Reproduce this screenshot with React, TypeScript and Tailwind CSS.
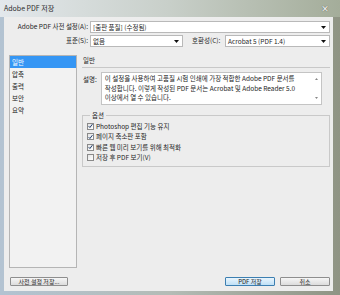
import { useState } from 'react'

const font = { fontFamily: '"Noto Sans CJK KR", "Noto Sans", sans-serif' }

const sections = ['일반', '압축', '출력', '보안', '요약']

const options = [
  { label: 'Photoshop 편집 기능 유지', checked: true },
  { label: '페이지 축소판 포함', checked: true },
  { label: '빠른 웹 미리 보기를 위해 최적화', checked: true },
  { label: '저장 후 PDF 보기(V)', checked: false },
]

function Select({ value, className = '' }: { value: string; className?: string }) {
  return (
    <div
      className={`flex h-[12px] items-center justify-between border border-[#b9b9b9] bg-white pl-[2px] pr-[3px] ${className}`}
    >
      <span className="whitespace-nowrap leading-[10px]">{value}</span>
      <svg width="5" height="3" viewBox="0 0 5 3" className="shrink-0">
        <path d="M0 0h5L2.5 3z" fill="#111" />
      </svg>
    </div>
  )
}

function Check({ checked }: { checked: boolean }) {
  return (
    <span className="flex h-[7px] w-[7px] shrink-0 items-center justify-center border border-[#8a8a8a] bg-gradient-to-br from-[#e4e4e4] to-white">
      {checked && (
        <svg width="6" height="6" viewBox="0 0 6 6">
          <path d="M0.8 3.2 2.3 4.8 5.3 0.8" fill="none" stroke="#1d3a6a" strokeWidth="1.2" />
        </svg>
      )}
    </span>
  )
}

export default function App() {
  const [active, setActive] = useState('일반')
  const [opts, setOpts] = useState(options)

  return (
    <div
      style={font}
      className="flex h-[295px] w-[340px] flex-col overflow-hidden bg-gradient-to-r from-[#b3c3d2] via-[#b4bcb6] to-[#8f9484] text-[6.5px] text-[#1e1e1e]"
    >
      {/* title bar */}
      <div className="flex h-[17px] shrink-0 items-center justify-between bg-gradient-to-r from-[#e3e8ec] via-[#c8cfc9] to-[#a4ad9a] pl-[4px] pr-[11px]">
        <span className="text-[7px] text-[#2a2a2a]">Adobe PDF 저장</span>
        <span className="text-[8px] font-bold leading-none text-white [text-shadow:0_0_1px_#333]">×</span>
      </div>

      {/* dialog body */}
      <div className="mb-[5px] ml-[4px] mr-[7px] flex flex-1 flex-col bg-[#ededed] pr-[3px] pt-[4px]">
        <div className="flex items-center gap-[2px]">
          <span className="w-[84px] whitespace-nowrap text-right">Adobe PDF 사전 설정(A):</span>
          <Select value="[출판 품질] (수정됨)" className="flex-1" />
        </div>
        <div className="mt-[2px] flex items-center gap-[2px]">
          <span className="w-[84px] text-right">표준(S):</span>
          <Select value="없음" className="w-[93px]" />
          <span className="ml-[7px] w-[30px] whitespace-nowrap">호환성(C):</span>
          <Select value="Acrobat 5 (PDF 1.4)" className="ml-[1px] flex-1" />
        </div>

        <div className="mt-[8px] flex flex-1 gap-[5px]">
          {/* section list */}
          <div className="ml-[5px] flex h-[213px] w-[68px] flex-col border border-[#b5b5b5] bg-[#f2f2f2]">
            {sections.map((s) => (
              <button
                key={s}
                type="button"
                onClick={() => setActive(s)}
                className={`h-[12px] px-[2px] text-left leading-[12px] ${
                  active === s ? 'bg-[#3596f4] text-white' : 'text-[#222]'
                }`}
              >
                {s}
              </button>
            ))}
          </div>

          {/* right panel */}
          <div className="flex flex-1 flex-col">
            <div className="border-b border-[#c8c8c8] pb-[3px] pl-[1px] pt-[1px] leading-[8px]">{active}</div>

            <div className="mt-[4px] flex gap-[4px] pl-[1px]">
              <span className="pt-[3px]">설명:</span>
              <div className="flex h-[33px] w-[221px] border border-[#c4c4c4] bg-white">
                <p className="flex-1 whitespace-nowrap pl-[3px] pt-[1px] leading-[9.5px] text-[#222]">
                  이 설정을 사용하여 고품질 시험 인쇄에 가장 적합한 Adobe PDF 문서를
                  <br />
                  작성합니다. 이렇게 작성된 PDF 문서는 Acrobat 및 Adobe Reader 5.0
                  <br />
                  이상에서 열 수 있습니다.
                </p>
                <div className="flex w-[8px] flex-col items-center justify-between py-[5px]">
                  <svg width="3" height="2" viewBox="0 0 3 2">
                    <path d="M0 2h3L1.5 0z" fill="#888" />
                  </svg>
                  <svg width="3" height="2" viewBox="0 0 3 2">
                    <path d="M0 0h3L1.5 2z" fill="#888" />
                  </svg>
                </div>
              </div>
            </div>

            <div className="relative mt-[10px] border border-[#c9c9c9] pb-[3px] pl-[4px] pt-[5px]">
              <span className="absolute -top-[5px] left-[7px] bg-[#ededed] px-[2px] leading-[8px]">옵션</span>
              {opts.map((o, i) => (
                <label key={o.label} className="flex h-[10.5px] items-center gap-[2px]">
                  <input
                    type="checkbox"
                    className="hidden"
                    checked={o.checked}
                    onChange={() =>
                      setOpts(opts.map((x, j) => (j === i ? { ...x, checked: !x.checked } : x)))
                    }
                  />
                  <Check checked={o.checked} />
                  <span className="leading-[9px]">{o.label}</span>
                </label>
              ))}
            </div>
          </div>
        </div>

        {/* buttons */}
        <div className="mb-[5px] mt-[9px] flex items-center pl-[6px]">
          <button
            type="button"
            className="h-[9px] w-[58px] rounded-[1px] border border-[#8e8e8e] bg-gradient-to-b from-[#f6f6f6] to-[#dcdcdc] text-[6px] leading-[7px]"
          >
            사전 설정 저장...
          </button>
          <div className="flex-1" />
          <button
            type="button"
            className="h-[9px] w-[50px] rounded-[1px] border border-[#3c7fb1] bg-gradient-to-b from-[#e9f5fd] to-[#bfe0f6] text-[6px] leading-[7px]"
          >
            PDF 저장
          </button>
          <button
            type="button"
            className="ml-[5px] h-[9px] w-[50px] rounded-[1px] border border-[#8e8e8e] bg-gradient-to-b from-[#f6f6f6] to-[#dcdcdc] text-[6px] leading-[7px]"
          >
            취소
          </button>
        </div>
      </div>
    </div>
  )
}
